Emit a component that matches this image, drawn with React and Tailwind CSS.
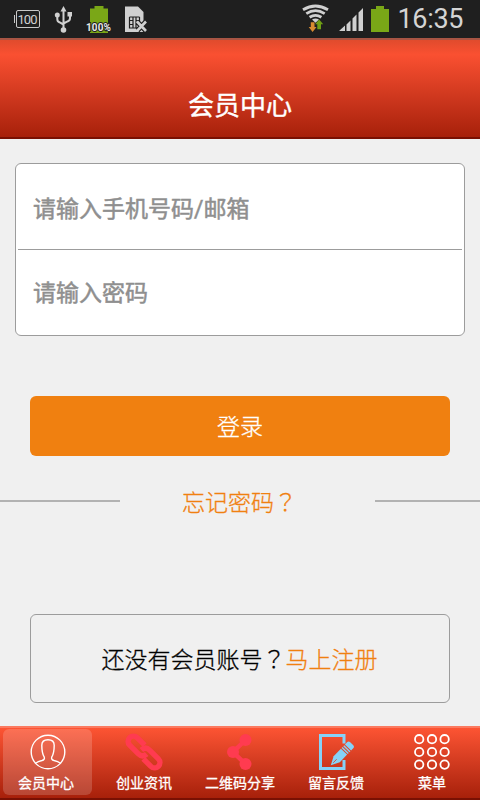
import { useState } from "react";

function StatusBar() {
  return (
    <div className="flex h-[38px] items-start justify-between bg-[#1f1f1f]">
      {/* Notifications */}
      <svg width="160" height="38" viewBox="0 0 160 38">
        <rect x="16.500" y="10.500" width="23" height="17" rx="1.500" fill="none" stroke="#c8c8c8" />
        <path d="M14.500 15v8" stroke="#c8c8c8" />
        <text x="17.500" y="24" fontSize="13" fill="#d0d0d0" fontFamily="Roboto" textLength="20">
          100
        </text>

        <g stroke="#d0d0d0" strokeWidth="2" fill="none">
          <path d="M63.500 9v21M57.300 16v3q0 2.500 2 3.200l4.200 2.300M70 15v3q0 2.500-2 3.200l-4.500 2.300" />
        </g>
        <g fill="#d0d0d0">
          <path d="M63.500 6l3 5.500h-6zM67.500 12h4.500v4.500h-4.500z" />
          <circle cx="57.300" cy="15" r="2.500" />
          <circle cx="63.500" cy="30" r="2.800" />
        </g>

        <path d="M94.500 6h9v2.500h4.500v24.500H90V8.500h4.500z" fill="#7aa717" />
        <text
          x="86"
          y="31"
          fontSize="10"
          fontWeight="700"
          fontFamily="Roboto"
          fill="#e8e8e8"
          stroke="#1f1f1f"
          strokeWidth="2"
          paintOrder="stroke"
          textLength="25"
        >
          100%
        </text>

        <path d="M125 6.500h13l5.500 5.500v20H125z" fill="#d0d0d0" />
        <path
          d="M129.500 17h10M129.500 17v11h10v-11M133 17v11M136 17v11M129.500 20.500h3.500M129.500 24.500h3.500M136 20.500h3.500M136 24.500h3.500"
          stroke="#1f1f1f"
          strokeWidth="1.200"
          fill="none"
        />
        <path d="M137.500 22l8 8.500M145.500 22l-8 8.500" stroke="#1f1f1f" strokeWidth="5" />
        <path d="M137 21.500l9 9.500M146 21.500l-9 9.500" stroke="#d0d0d0" strokeWidth="2.600" />
      </svg>

      {/* System state */}
      <svg width="190" height="38" viewBox="0 0 190 38">
        <g stroke="#d0d0d0" strokeWidth="2.800" fill="none">
          <path d="M13 9.800q12.500-7.600 25 0" />
          <path d="M16.300 13.600q9.200-5.800 18.400 0" />
          <path d="M19.600 17.200q5.900-3.800 11.800 0" />
        </g>
        <path d="M22 19.400q3.500-2 7 0l-3.500 3.400z" fill="#d0d0d0" />
        <path d="M20.800 22.300h3.700v4.700h2l-3.900 5-3.900-5h2.100z" fill="#d98b30" />
        <path d="M29.200 19.500l4 4.800h-2.200v5h-3.700v-5h-2.200z" fill="#6f9f14" />
        <path
          d="M49 31l6-5.500V31zM56.500 24.500l4-4V31h-4zM62.500 18.500l4-4V31h-4zM68.500 12.500l4.500-4.500V31h-4.500z"
          fill="#d0d0d0"
        />
        <path d="M86 6h8v3h5v23H81V9h5z" fill="#7aa717" />
        <text x="107.500" y="28" fontSize="27" fontWeight="400" fontFamily="Roboto" fill="#d4d4d4" textLength="66">
          16:35
        </text>
      </svg>
    </div>
  );
}

function UserIcon() {
  return (
    <svg width="36" height="36" viewBox="0 0 36 36" fill="none" stroke="white" strokeWidth="1.400">
      <circle cx="18" cy="18" r="16.800" />
      <path d="M5.500 29.300q2.500-2 6.500-2.800 3-.8 2.300-3.300-2.500-4-2.500-12 0-5.500 6.200-5.500t6.200 5.500q0 8-2.500 12-.7 2.500 2.300 3.300 4 .8 6.500 2.800" />
    </svg>
  );
}

function LinkIcon() {
  return (
    <svg width="38" height="38" viewBox="0 0 38 38" fill="none" stroke="#ff3b50" strokeWidth="5.400">
      <g transform="translate(19 19) rotate(45)">
        <path d="M-4.300 -5.300H-15a5.300 5.300 0 0 0 0 10.600H-3Q3 5.300 3.300 -.5" />
        <path d="M4.300 5.300H15a5.300 5.300 0 0 0 0-10.600H3Q-3-5.300-3.300 .5" />
      </g>
    </svg>
  );
}

function ShareIcon() {
  return (
    <svg width="36" height="36" viewBox="0 0 36 36" fill="#ff3b50">
      <path d="M23.500 6L11 18l12.500 12" fill="none" stroke="#ff3b50" strokeWidth="4.500" />
      <circle cx="23.500" cy="6" r="6" />
      <circle cx="11" cy="18" r="6" />
      <circle cx="23.500" cy="30" r="6" />
    </svg>
  );
}

function FeedbackIcon() {
  return (
    <svg width="36" height="36" viewBox="0 0 36 36">
      <path d="M26 9.500V1.500H2.500v33H26V26" fill="none" stroke="#86d2f8" strokeWidth="3" />
      <g transform="translate(12.800 31.300) rotate(-46)" fill="#86d2f8">
        <path d="M0 0l8.500-4.300h10.500v8.600H8.500z" />
        <path d="M20 -4.300h1.400v8.600H20zM22.400 -4.300h1.400v8.600h-1.400zM24.800 -4.300h2.700q2.500 0 2.500 2v4.600q0 2-2.500 2h-2.700z" />
        <path d="M3.500 0h5" stroke="#d9442a" strokeWidth="0.800" />
      </g>
    </svg>
  );
}

function MenuIcon() {
  return (
    <svg width="36" height="36" viewBox="0 0 36 36" fill="none" stroke="white" strokeWidth="1.800">
      {[5.2, 18, 30.6].map((y) =>
        [5.2, 18, 30.6].map((x) => <circle key={`${x}-${y}`} cx={x} cy={y} r="4.200" />)
      )}
    </svg>
  );
}

const tabs = [
  { label: "会员中心", Icon: UserIcon },
  { label: "创业资讯", Icon: LinkIcon },
  { label: "二维码分享", Icon: ShareIcon },
  { label: "留言反馈", Icon: FeedbackIcon },
  { label: "菜单", Icon: MenuIcon },
];

// full-width question mark sits centred in its cell
function QuestionMark() {
  return <span className="font-['Noto_Sans_CJK_TC',sans-serif]">？</span>;
}

export default function App() {
  const [account, setAccount] = useState("");
  const [password, setPassword] = useState("");
  const [active, setActive] = useState(0);

  return (
    <div className="flex h-[800px] w-[480px] flex-col overflow-hidden bg-[#f0f0f0] font-['Noto_Sans_CJK_SC',sans-serif]">
      <StatusBar />

      <header className="flex h-[101px] items-end justify-center border-t-2 border-b-2 border-t-[#a85443] border-b-[#791003] bg-linear-to-b from-[#e04b2d] via-[#fa5031] via-15% to-[#a7200a] pb-[14px]">
        <h1 className="text-[26px] leading-[38px] text-white [-webkit-text-stroke:0.4px_white]">会员中心</h1>
      </header>

      <main className="flex flex-1 flex-col pt-6">
        {/* Login form */}
        <div className="mx-[15px] flex h-[173px] flex-col rounded-md border border-[#9c9c9c] bg-white px-[2px]">
          <input
            type="text"
            value={account}
            onChange={(e) => setAccount(e.target.value)}
            placeholder="请输入手机号码/邮箱"
            className="h-[86px] border-b border-[#9c9c9c] px-[15px] pt-[5px] font-['Roboto','Noto_Sans_CJK_SC',sans-serif] text-[23px] outline-none placeholder:text-[#8f8f8f] placeholder:[-webkit-text-stroke:0.5px_#8f8f8f]"
          />
          <input
            type="password"
            value={password}
            onChange={(e) => setPassword(e.target.value)}
            placeholder="请输入密码"
            className="h-[85px] px-[15px] pb-1 text-[23px] outline-none placeholder:text-[#8f8f8f] placeholder:[-webkit-text-stroke:0.5px_#8f8f8f]"
          />
        </div>

        <button className="mx-[30px] mt-[60px] h-[60px] rounded-md bg-[#f08010] pb-0.5 text-[23px] font-light text-white [-webkit-text-stroke:0.3px_white]">
          登录
        </button>

        <div className="mt-[25px] flex h-10 items-center">
          <div className="h-[2px] w-[120px] bg-[#b2b2b2]" />
          <a className="flex-1 pl-[62px] text-[23px] font-light text-[#f08010] [-webkit-text-stroke:0.3px_#f08010]">
            忘记密码
            <QuestionMark />
          </a>
          <div className="h-[2px] w-[105px] bg-[#b2b2b2]" />
        </div>

        <div className="mx-[30px] mt-[93px] flex h-[89px] items-center justify-center rounded-md border border-[#9c9c9c] pr-px text-[23px] font-light text-black [-webkit-text-stroke:0.3px_currentColor]">
          还没有会员账号
          <QuestionMark />
          <a className="text-[#f08010] [-webkit-text-stroke:0.3px_#f08010]">马上注册</a>
        </div>
      </main>

      <nav className="flex h-[74px] border-t-2 border-b-2 border-t-[#fb7a60] border-b-[#791003] bg-linear-to-b from-[#fd5433] to-[#a7200a]">
        {tabs.map(({ label, Icon }, i) => (
          <button
            key={label}
            onClick={() => setActive(i)}
            className={i === 0 ? "w-[95px] pt-px pr-[3px] pb-[3px] pl-[3px]" : "w-24 pt-px pb-[3px] pl-[2px]"}
          >
            <span
              className={
                "flex h-full flex-col items-center rounded-md pt-[5px] text-white " +
                (i === active ? "bg-white/17" : "")
              }
            >
              <span className="flex h-9 items-center">
                <Icon />
              </span>
              <span
                className={
                  "mt-[2px] text-[14px] leading-5 whitespace-nowrap [-webkit-text-stroke:0.3px_white] " +
                  (i === 0 ? "mr-[3px]" : "")
                }
              >
                {label}
              </span>
            </span>
          </button>
        ))}
      </nav>
    </div>
  );
}
